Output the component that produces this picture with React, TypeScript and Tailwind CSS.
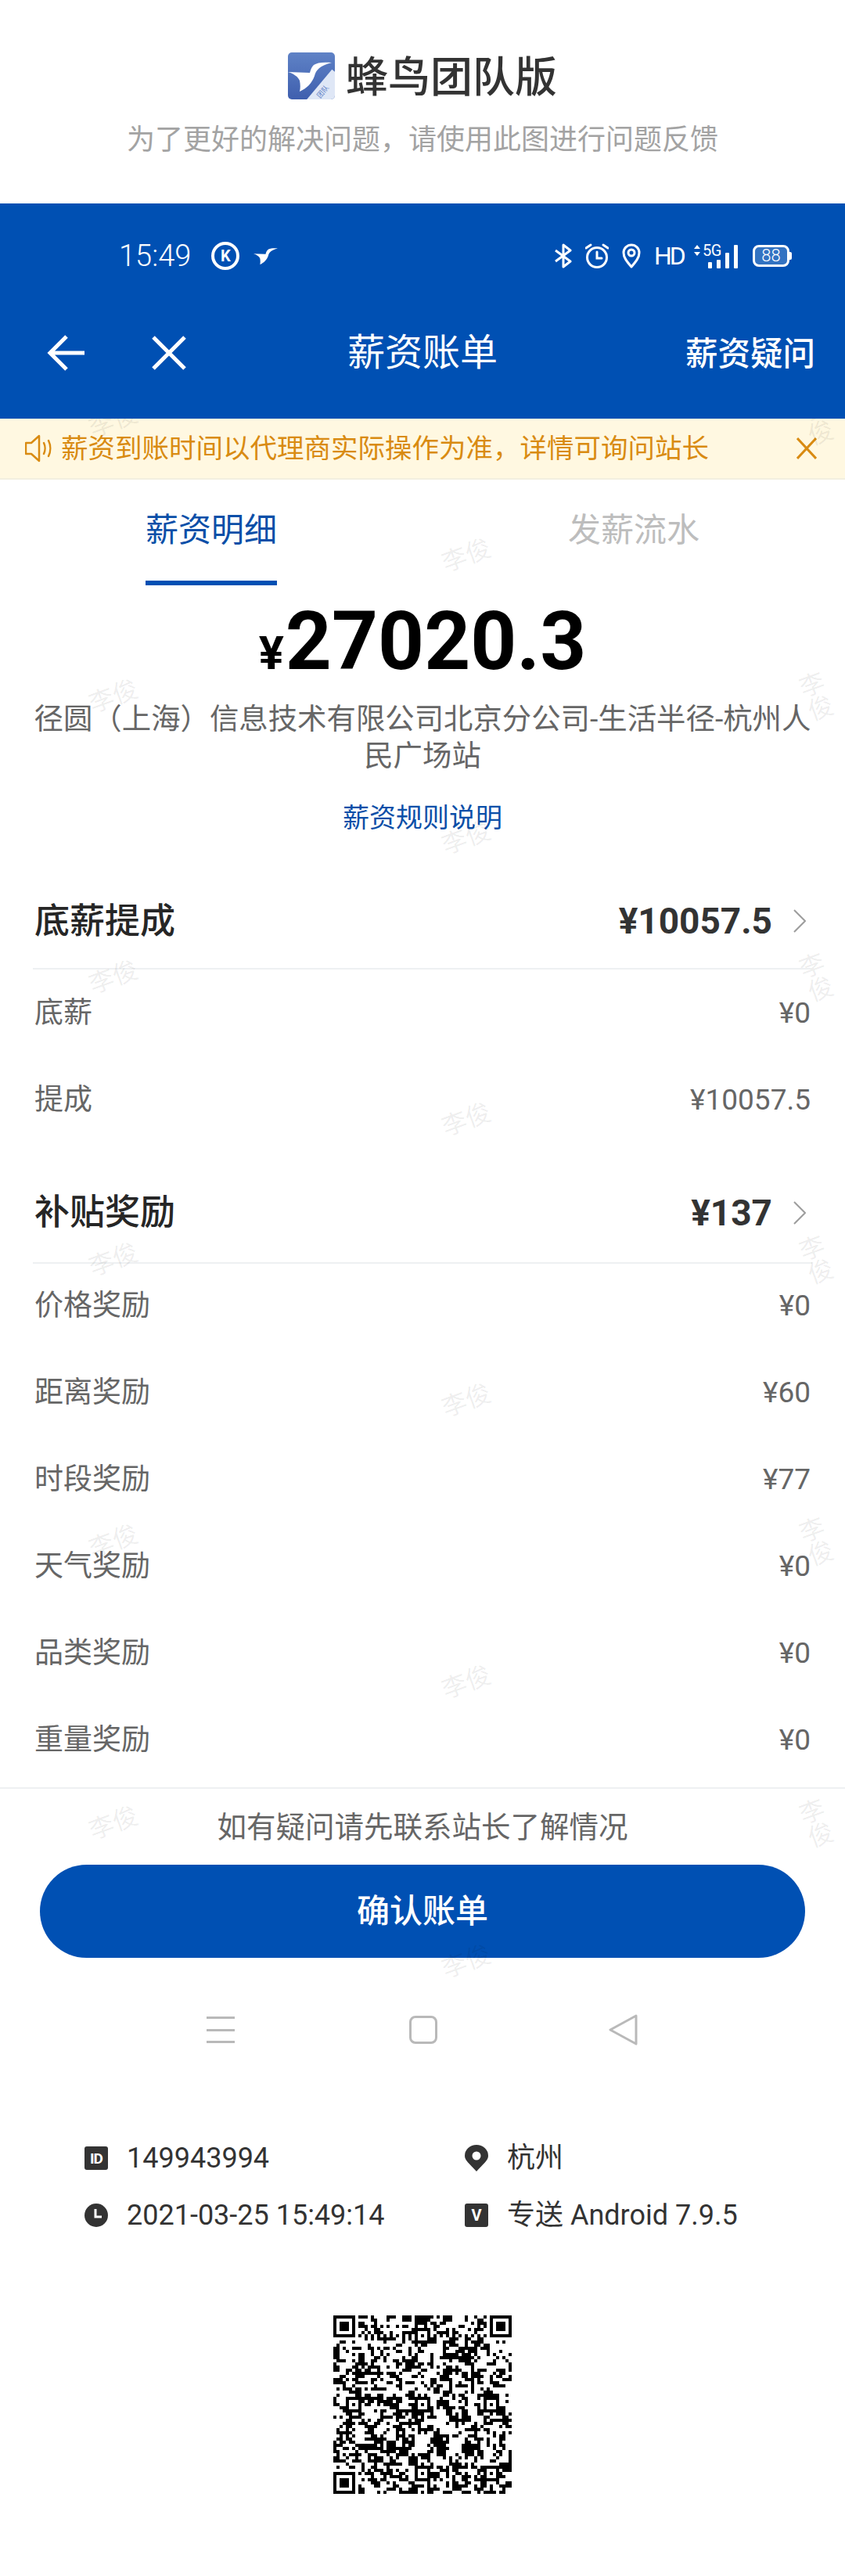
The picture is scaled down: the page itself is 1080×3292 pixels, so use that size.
import type { ReactNode } from 'react'

const FONT = 'font-[Roboto,"Noto_Sans_CJK_SC",sans-serif]'

// Watermark stamps, three columns, repeat every 360px. Offsets are from the top of the page body.
const STAMP_ROWS_SIDE = [3, 355, 714, 1075, 1435, 1795]
const STAMP_ROWS_MIDDLE = [175, 536, 896, 1255, 1615, 1972]
const STAMPS = [
  ...STAMP_ROWS_SIDE.map((y) => ({ x: 145, y })),
  ...STAMP_ROWS_MIDDLE.map((y) => ({ x: 596, y })),
  ...STAMP_ROWS_SIDE.map((y) => ({ x: 1045, y })),
]

const BASE_ROWS = [
  { label: '底薪', value: '¥0' },
  { label: '提成', value: '¥10057.5' },
]

const BONUS_ROWS = [
  { label: '价格奖励', value: '¥0' },
  { label: '距离奖励', value: '¥60' },
  { label: '时段奖励', value: '¥77' },
  { label: '天气奖励', value: '¥0' },
  { label: '品类奖励', value: '¥0' },
  { label: '重量奖励', value: '¥0' },
]

// 57 x 57 modules, 4px each. Finders, timing and alignment are real; the data area is seeded noise.
function buildQr() {
  const size = 57
  const cells: boolean[][] = Array.from({ length: size }, () => Array(size).fill(false))
  let seed = 149943994
  const next = () => {
    seed = (seed * 1103515245 + 12345) & 0x7fffffff
    return seed / 0x7fffffff
  }
  for (let y = 0; y < size; y++) {
    for (let x = 0; x < size; x++) {
      const left = x > 0 && cells[y][x - 1]
      const up = y > 0 && cells[y - 1][x]
      const bias = 0.32 + (left ? 0.16 : 0) + (up ? 0.14 : 0)
      cells[y][x] = next() < bias
    }
  }
  const clear = (x0: number, y0: number, w: number, h: number) => {
    for (let y = y0; y < y0 + h; y++) for (let x = x0; x < x0 + w; x++) cells[y][x] = false
  }
  const finder = (x0: number, y0: number) => {
    for (let y = 0; y < 7; y++) {
      for (let x = 0; x < 7; x++) {
        const ring = x === 0 || y === 0 || x === 6 || y === 6
        const core = x >= 2 && x <= 4 && y >= 2 && y <= 4
        cells[y0 + y][x0 + x] = ring || core
      }
    }
  }
  clear(0, 0, 8, 8)
  clear(49, 0, 8, 8)
  clear(0, 49, 8, 8)
  finder(0, 0)
  finder(50, 0)
  finder(0, 50)
  for (let i = 8; i < 49; i++) {
    cells[6][i] = i % 2 === 0
    cells[i][6] = i % 2 === 0
  }
  const centers = [6, 28, 50]
  for (const cy of centers) {
    for (const cx of centers) {
      if ((cx === 6 && cy === 6) || (cx === 50 && cy === 6) || (cx === 6 && cy === 50)) continue
      for (let y = -2; y <= 2; y++) {
        for (let x = -2; x <= 2; x++) {
          cells[cy + y][cx + x] = Math.max(Math.abs(x), Math.abs(y)) !== 1
        }
      }
    }
  }
  let d = ''
  cells.forEach((row, y) =>
    row.forEach((on, x) => {
      if (on) d += `M${x} ${y}h1v1h-1z`
    }),
  )
  return d
}

const QR_PATH = buildQr()

function BirdMark({ className, fill = 'white' }: { className: string; fill?: string }) {
  return (
    <svg viewBox="0 0 56 38" className={className}>
      <path
        fill={fill}
        d="M56 1 C45 0 37 1 33 4 C30 7 29 10 28 14 L0 13 C7 15 13 19 15 24 C16 29 16 34 15 38 C24 34 31 27 34 18 C36 10 41 5 56 1Z"
      />
    </svg>
  )
}

function AppLogo() {
  return (
    <div className="relative h-[60px] w-[60px] overflow-hidden rounded-[5px] bg-gradient-to-b from-[#5f82c6] to-[#3f5fae]">
      <BirdMark className="absolute left-0 top-[12px] h-[38px] w-[56px]" />
      <div className="absolute bottom-[-34px] right-[-30px] h-[60px] w-[60px] rotate-[-50deg] bg-[#dfe7f6]" />
      <span className="absolute bottom-[5px] right-[6px] rotate-[-50deg] text-[9px] leading-none text-[#5f82c6]">团队</span>
    </div>
  )
}

function StatusBar() {
  return (
    <div className="flex h-[54px] items-center justify-between pl-[152px] pr-[68px] text-white">
      <div className="flex items-center">
        <span className="text-[38px] font-light leading-none">15:49</span>
        <div className="ml-[26px] flex h-[36px] w-[36px] items-center justify-center rounded-full border-[4px] border-white text-[20px] font-bold leading-none">
          K
        </div>
        <BirdMark className="ml-[18px] h-[21px] w-[31px]" />
      </div>
      <div className="flex items-center">
        <svg viewBox="0 0 24 32" className="h-[32px] w-[24px]" fill="none" stroke="white" strokeWidth="3">
          <path d="M2 9 L21 23 L12 30 V2 L21 9 L2 23" strokeLinejoin="round" />
        </svg>
        <svg viewBox="0 0 30 32" className="ml-[16px] h-[32px] w-[30px]" fill="none" stroke="white" strokeWidth="3">
          <circle cx="15" cy="18" r="12.5" />
          <path d="M15 11v8h6M1 6l6-4M29 6l-6-4" strokeLinecap="round" />
        </svg>
        <svg viewBox="0 0 24 32" className="ml-[17px] h-[32px] w-[24px]" fill="none" stroke="white" strokeWidth="3">
          <path d="M12 30 C6 23 2 18 2 12 A10 10 0 0 1 22 12 C22 18 18 23 12 30Z" strokeLinejoin="round" />
          <circle cx="12" cy="12" r="4" />
        </svg>
        <span className="ml-[17px] w-[37px] text-[32px] font-normal leading-none tracking-[-3px]">HD</span>
        <div className="relative ml-[14px] h-[32px] w-[56px]">
          <svg viewBox="0 0 8 14" className="absolute left-0 top-[2px] h-[14px] w-[8px]" fill="white">
            <path d="M4 0 8 5H0ZM4 14 0 9h8Z" />
          </svg>
          <span className="absolute left-[11px] top-0 text-[20px] font-normal leading-[18px] tracking-[-0.5px]">5G</span>
          <div className="absolute bottom-0 left-[18px] flex items-end gap-[6px]">
            <span className="h-[8px] w-[5px] rounded-[1px] bg-white" />
            <span className="h-[11px] w-[5px] rounded-[1px] bg-white" />
            <span className="h-[20px] w-[5px] rounded-[1px] bg-white" />
            <span className="h-[30px] w-[5px] rounded-[1px] bg-white" />
          </div>
        </div>
        <div className="ml-[19px] flex items-center">
          <div className="flex h-[28px] w-[47px] items-center justify-center rounded-[8px] border-[3px] border-white bg-white/20 text-[22px] font-light leading-none">
            88
          </div>
          <span className="h-[10px] w-[3px] rounded-r-[2px] bg-white" />
        </div>
      </div>
    </div>
  )
}

function NavBar() {
  return (
    <div className="relative mt-[13px] flex h-[168px] items-center justify-between pl-[60px] pr-[38px] text-white">
      <div className="flex items-center">
        <svg viewBox="0 0 48 46" className="h-[46px] w-[48px]" fill="none" stroke="white" strokeWidth="5">
          <path d="M48 23H4M25 2 4 23l21 21" />
        </svg>
        <svg viewBox="0 0 44 44" className="ml-[86px] h-[44px] w-[44px]" fill="none" stroke="white" strokeWidth="5">
          <path d="M2 2l40 40M42 2 2 42" />
        </svg>
      </div>
      <span className="absolute left-1/2 -translate-x-1/2 text-[48px] leading-none">薪资账单</span>
      <span className="mt-[3px] text-[41.500px] font-medium leading-none">薪资疑问</span>
    </div>
  )
}

function Notice() {
  return (
    <div className="flex h-[78px] items-center border-b-2 border-[#f3efdf] bg-[#fff8e1] pl-[32px] pr-[36px] text-[#d98b12]">
      <svg viewBox="0 0 35 36" className="h-[36px] w-[35px]" fill="none" stroke="#d98b12" strokeWidth="2.5">
        <path d="M1 11h7L18 2v32L8 25H1Z" strokeLinejoin="round" />
        <path d="M24 11c2 4 2 10 0 14M30 8c3 6 3 14 0 20" strokeLinecap="round" />
      </svg>
      <span className="ml-[11px] flex-1 text-[34.500px] leading-none">
        薪资到账时间以代理商实际操作为准，详情可询问站长
      </span>
      <svg viewBox="0 0 26 28" className="h-[28px] w-[26px]" fill="none" stroke="#d98b12" strokeWidth="3">
        <path d="M1 1l24 26M25 1 1 27" />
      </svg>
    </div>
  )
}

function Tabs() {
  return (
    <div className="flex h-[135px]">
      <div className="flex w-[540px] flex-col items-center">
        <span className="flex h-[129px] items-center text-[42px] leading-none text-[#0b4fa8]">薪资明细</span>
        <span className="h-[6px] w-[168px] bg-[#0050b3]" />
      </div>
      <div className="flex w-[540px] flex-col items-center">
        <span className="flex h-[129px] items-center text-[42px] leading-none text-[#bdbdbd]">发薪流水</span>
      </div>
    </div>
  )
}

function Summary() {
  return (
    <div className="flex flex-col items-center">
      <div className="flex h-[142px] items-baseline justify-center pt-[20px] font-bold leading-none text-black">
        <span className="text-[60px]">¥</span>
        <span className="ml-[2px] text-[103px]">27020.3</span>
      </div>
      <p className="mt-[6px] w-[1000px] text-center text-[37.400px] leading-[47px] text-[#666666]">
        径圆（上海）信息技术有限公司北京分公司-生活半径-杭州人民广场站
      </p>
      <span className="mt-[25px] flex h-[60px] items-center text-[34px] leading-none text-[#0b4fa8]">薪资规则说明</span>
    </div>
  )
}

function Section({ title, total, headerClass, children }: { title: string; total: string; headerClass: string; children: ReactNode }) {
  return (
    <section>
      <div className={`mx-[42px] flex items-center justify-between border-b-2 border-[#eef0f2] ${headerClass}`}>
        <span className="pl-[2px] text-[45px] font-medium leading-none text-[#262626]">{title}</span>
        <div className="flex items-center pr-[8px]">
          <span className="text-[46px] font-bold leading-none text-[#333333]">{total}</span>
          <svg viewBox="0 0 16 30" className="ml-[27px] h-[30px] w-[16px]" fill="none" stroke="#9e9e9e" strokeWidth="2">
            <path d="M1 1l14 14L1 29" />
          </svg>
        </div>
      </div>
      {children}
    </section>
  )
}

function Row({ label, value }: { label: string; value: string }) {
  return (
    <div className="flex h-[111px] items-center justify-between px-[44px] text-[#666666]">
      <span className="text-[37px] leading-none">{label}</span>
      <span className="text-[37px] leading-none">{value}</span>
    </div>
  )
}

function PhoneNav() {
  return (
    <div className="flex h-[92px] items-center">
      <div className="flex w-full items-center">
        <div className="ml-[264px] flex h-[34px] w-[36px] flex-col justify-between">
          <span className="h-[3px] bg-[#b9b9b9]" />
          <span className="h-[3px] bg-[#b9b9b9]" />
          <span className="h-[3px] bg-[#b9b9b9]" />
        </div>
        <div className="ml-[223px] h-[36px] w-[36px] rounded-[8px] border-[3px] border-[#b9b9b9]" />
        <svg viewBox="0 0 38 40" className="ml-[219px] h-[40px] w-[38px]" fill="none" stroke="#b9b9b9" strokeWidth="3">
          <path d="M35 2 2 20l33 18Z" strokeLinejoin="round" />
        </svg>
      </div>
    </div>
  )
}

function InfoItem({ icon, text, className }: { icon: ReactNode; text: string; className: string }) {
  return (
    <div className={`flex h-[40px] items-center ${className}`}>
      <span className="flex w-[30px] justify-center">{icon}</span>
      <span className="ml-[24px] text-[36px] leading-none text-[#333333]">{text}</span>
    </div>
  )
}

function SquareBadge({ label, text }: { label: string; text: string }) {
  return (
    <span className={`flex h-[30px] w-[30px] items-center justify-center rounded-[3px] bg-[#333333] font-bold leading-none text-white ${text}`}>
      {label}
    </span>
  )
}

function DeviceInfo() {
  return (
    <div className="flex flex-col gap-[33px] pl-[108px]">
      <div className="flex">
        <InfoItem className="w-[486px]" text="149943994" icon={<SquareBadge label="ID" text="text-[19px] tracking-[-1px]" />} />
        <InfoItem
          className=""
          text="杭州"
          icon={
            <svg viewBox="0 0 30 34" className="h-[34px] w-[30px]">
              <path
                fill="#333333"
                fillRule="evenodd"
                d="M15 34C6 24 0 20 0 14a15 14 0 0 1 30 0c0 6-6 10-15 20Zm0-14.500a5.500 5.500 0 1 0 0-11 5.500 5.500 0 0 0 0 11Z"
              />
            </svg>
          }
        />
      </div>
      <div className="flex">
        <InfoItem
          className="w-[486px]"
          text="2021-03-25 15:49:14"
          icon={
            <svg viewBox="0 0 30 30" className="h-[30px] w-[30px]">
              <circle cx="15" cy="15" r="15" fill="#333333" />
              <path d="M14 7v10h8" fill="none" stroke="white" strokeWidth="3" />
            </svg>
          }
        />
        <InfoItem className="" text="专送 Android 7.9.5" icon={<SquareBadge label="V" text="text-[20px]" />} />
      </div>
    </div>
  )
}

export default function App() {
  return (
    <div className={`h-[3292px] w-[1080px] overflow-hidden bg-white ${FONT}`}>
      <header className="flex h-[260px] flex-col items-center pt-[67px]">
        <div className="flex h-[60px] items-center">
          <AppLogo />
          <span className="ml-[14px] mt-[5px] text-[54px] font-medium leading-none text-[#333333]">蜂鸟团队版</span>
        </div>
        <p className="mt-[34px] text-[36px] leading-[36px] text-[#a3a3a3]">
          为了更好的解决问题，请使用此图进行问题反馈
        </p>
      </header>

      <div className="h-[275px] bg-[#0050b3] pt-[40px]">
        <StatusBar />
        <NavBar />
      </div>

      <div className="relative">
        <Notice />
        <Tabs />
        <Summary />
        <div className="mt-[42px]">
          <Section title="底薪提成" total="¥10057.5" headerClass="h-[122px]">
            {BASE_ROWS.map((r) => (
              <Row key={r.label} {...r} />
            ))}
          </Section>
        </div>
        <div className="mt-[28px]">
          <Section title="补贴奖励" total="¥137" headerClass="h-[126px] pb-[3px]">
            <div className="mt-[-2px]">
              {BONUS_ROWS.map((r) => (
                <Row key={r.label} {...r} />
              ))}
            </div>
          </Section>
        </div>
        <div className="mt-[5px] border-t-2 border-[#eef0f2]">
          <p className="mt-[29px] text-center text-[37.500px] leading-[40px] text-[#666666]">如有疑问请先联系站长了解情况</p>
          <button
            type="button"
            className="mx-[51px] mt-[28px] flex h-[119px] w-[978px] items-center justify-center rounded-full bg-[#0050b3] text-[42px] font-medium leading-none text-white"
          >
            确认账单
          </button>
        </div>
        <div className="pt-[46px]">
          <PhoneNav />
        </div>

        <div className="pointer-events-none absolute inset-0 overflow-hidden">
          {STAMPS.map((s) => (
            <span
              key={`${s.x}-${s.y}`}
              className="absolute -translate-x-1/2 -translate-y-1/2 rotate-[-20deg] text-[32px] leading-none text-[#000000]/[0.08]"
              style={{ left: s.x, top: s.y }}
            >
              李俊
            </span>
          ))}
        </div>
      </div>

      <div className="mt-[98px]">
        <DeviceInfo />
      </div>

      <div className="mt-[108px] flex justify-center">
        <svg viewBox="0 0 57 57" className="h-[228px] w-[228px]" shapeRendering="crispEdges">
          <path d={QR_PATH} fill="#000000" />
        </svg>
      </div>
    </div>
  )
}
